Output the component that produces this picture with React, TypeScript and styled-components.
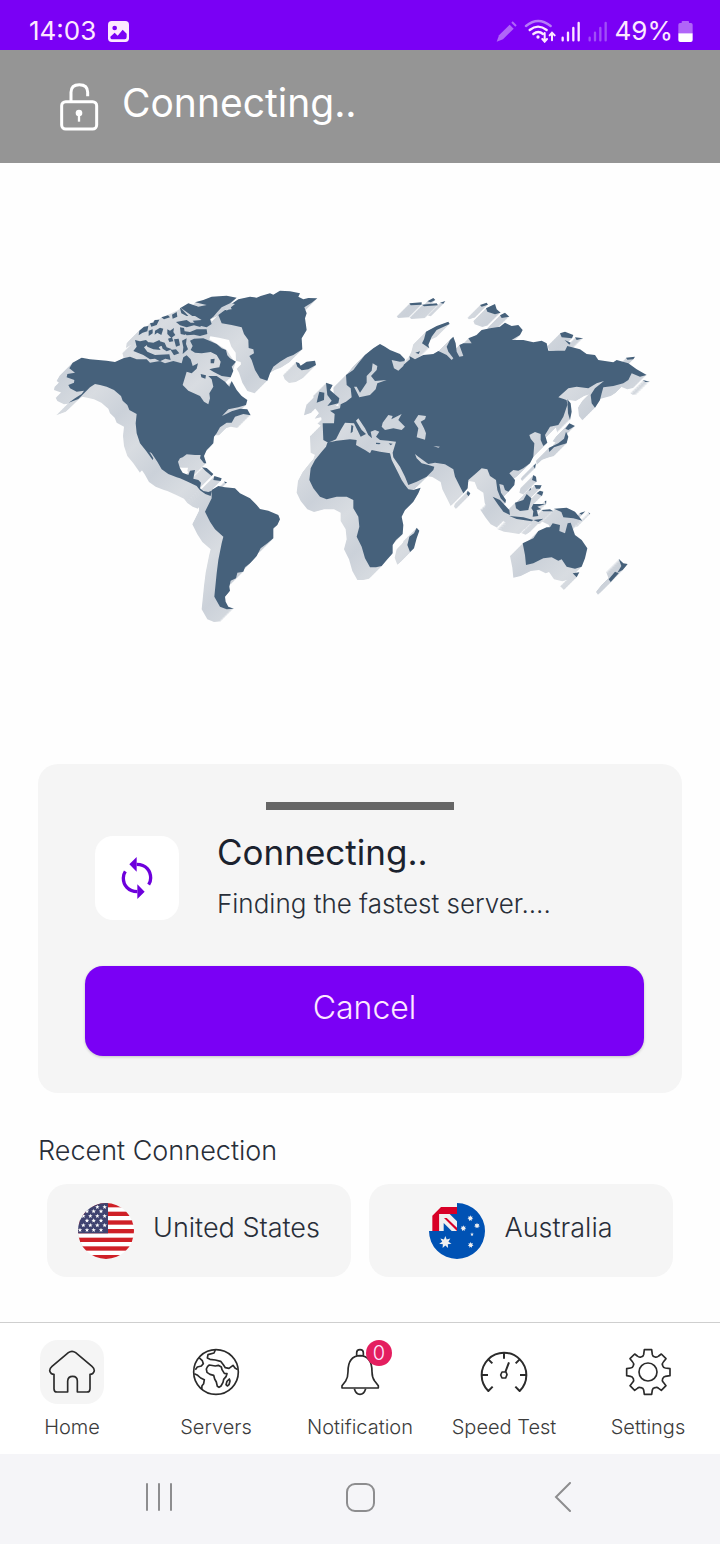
import React from 'react';
import styled, { createGlobalStyle } from 'styled-components';

const GlobalStyle = createGlobalStyle`
  * { box-sizing: border-box; }
  body { margin: 0; background: #fefefe; }
  button { border: 0; padding: 0; background: none; font: inherit; color: inherit; cursor: pointer; }
  svg { display: block; flex: none; }
`;

const purple = '#7a00f5';
const ink = '#1b222e';
const softInk = '#282e39';
const land = '#46617b';
const sea = '#cfd5dc';

const Screen = styled.div`
  display: flex;
  flex-direction: column;
  min-height: 100vh;
  font-family: Inter, 'Open Sans', sans-serif;
  font-weight: 300;
  color: ${softInk};
`;

const StatusBar = styled.div`
  display: flex;
  flex: none;
  align-items: center;
  justify-content: space-between;
  height: 50px;
  padding: 12px 27px 0 29px;
  background: ${purple};
  color: #fde8ff;
  font-weight: 400;
  font-size: 26px;
  line-height: 36px;
`;

const StatusGroup = styled.div<{ $gap: number }>`
  display: flex;
  align-items: center;
  gap: ${p => p.$gap}px;
`;

const Header = styled.header`
  display: flex;
  flex: none;
  align-items: center;
  gap: 22px;
  height: 113px;
  padding: 0 59px;
  background: #959595;
  color: #fff;
`;

const HeaderTitle = styled.h1`
  margin: 0 0 8px;
  font-size: 39px;
  line-height: 48px;
  font-weight: 400;
`;

const MapFigure = styled.div`
  svg { width: 100%; height: auto; }
`;

const Panel = styled.section`
  margin: 0 38px;
  padding: 38px 0 37px;
  border-radius: 20px;
  background: #f5f5f5;
`;

const Handle = styled.div`
  width: 188px;
  height: 8px;
  margin: 0 auto;
  background: #666;
`;

const StatusRow = styled.div`
  display: flex;
  gap: 38px;
  margin: 26px 38px 40px 57px;
`;

const IconTile = styled.div`
  display: grid;
  place-items: center;
  width: 84px;
  height: 84px;
  border-radius: 18px;
  background: #fff;
`;

const StatusTitle = styled.h2`
  margin: -6px 0 8px;
  color: ${ink};
  font-size: 35px;
  line-height: 44px;
  font-weight: 400;
`;

const StatusText = styled.p`
  margin: 0;
  font-size: 26px;
  line-height: 44px;
`;

const Actions = styled.div`
  padding: 0 38px 0 47px;
`;

const CancelButton = styled.button`
  display: block;
  width: 100%;
  height: 90px;
  padding-bottom: 6px;
  border-radius: 18px;
  background: ${purple};
  color: #fde8ff;
  font-size: 32px;
  line-height: 40px;
  box-shadow: 0 1px 3px rgba(0, 0, 0, 0.2);
`;

const SectionTitle = styled.h2`
  margin: 38px 38px 13px;
  font-size: 27px;
  line-height: 40px;
  font-weight: 300;
`;

const Recents = styled.div`
  display: grid;
  grid-template-columns: 1fr 1fr;
  gap: 18px;
  margin: 0 47px 44px;
`;

const Recent = styled.button`
  display: flex;
  align-items: center;
  justify-content: center;
  gap: 19px;
  height: 93px;
  border-radius: 20px;
  background: #f5f5f5;
  font-size: 27px;
  line-height: 40px;
`;

const RecentName = styled.span`
  padding-bottom: 6px;
`;

const TabBar = styled.nav`
  display: grid;
  flex: none;
  grid-template-columns: repeat(5, 1fr);
  height: 132px;
  margin-top: auto;
  padding-top: 17px;
  border-top: 1px solid #cfcfcf;
  background: #fff;
`;

const Tab = styled.button`
  display: flex;
  flex-direction: column;
  align-items: center;
  gap: 9px;
  color: #3c3c3c;
  font-size: 20px;
  line-height: 28px;
  white-space: nowrap;
`;

const TabIcon = styled.span<{ $active?: boolean }>`
  position: relative;
  width: 64px;
  height: 64px;
  border-radius: 18px;
  background: ${p => (p.$active ? '#f5f5f5' : 'transparent')};
`;

const Badge = styled.span`
  position: absolute;
  top: 0;
  right: 0;
  width: 26px;
  height: 26px;
  border-radius: 50%;
  background: #e41e5f;
  color: #fde8ff;
  font-size: 20px;
  line-height: 26px;
  text-align: center;
`;

const SystemBar = styled.div`
  display: grid;
  flex: none;
  grid-template-columns: repeat(3, 1fr);
  align-items: center;
  height: 90px;
  padding: 0 58px 4px;
  background: #f5f5f8;
`;

const SystemButton = styled.button`
  display: grid;
  place-items: center;
`;

/* Coastlines are stored per chart tile; each tile has its own origin. */
const tiles = {
  A: [120, 810],
  B: [540, 1290],
  C: [870, 840],
  D: [1440, 840],
  E: [1200, 1290],
} as const;
type Run = [keyof typeof tiles, string];

const outline = (...runs: Run[]) =>
  'M' +
  runs
    .flatMap(([tile, pts]) =>
      pts.split(' ').map(p => {
        const [x, y] = p.split(',').map(Number);
        return `${x + tiles[tile][0]} ${y + tiles[tile][1]}`;
      }),
    )
    .join('L') +
  'Z';

const islands = (tile: keyof typeof tiles, list: string[]) => list.map(p => outline([tile, p])).join('');

const landPath = [
  // North and Central America
  outline(
    ['A', '88,295 98,278 125,263 150,268 200,272 225,276 250,265 270,260 290,268 320,268 330,278 360,273 375,280 400,273 425,280 430,262 440,256 452,268 458,288 474,280 470,296 455,310 440,305 428,345 445,362 480,378 492,395 505,403 510,385 508,370 520,350 515,328 505,318 530,318 555,335 568,350 575,333 590,360 605,378 622,390 618,405 595,412 565,418 546,438 575,424 600,416 622,418 632,436 610,432 585,440 575,458 560,458 540,472 530,490 522,500 520,520 500,540 492,558'],
    ['B', '74,85 79,100 72,100 60,85 62,75 45,75 20,73 8,82 0,85 -6,95 0,115 8,128 25,135 30,122 45,120 42,135 40,146 55,150 63,158 60,175 70,183 85,186 95,182 92,198 76,192 60,181 50,168 25,156 0,145 -10,142'],
    ['A', '385,612 365,598 352,575 335,550 328,545 340,565 338,570 318,542 300,520 290,490 287,460 290,432 268,420 262,405 248,392 243,378 222,360 200,350 180,345 165,342 150,352 130,372 115,387 86,398 105,385 125,372 132,362 110,365 90,355 85,345 102,338 103,330 80,322 82,312 105,308'],
  ),
  // Canadian archipelago, Greenland, Iceland
  islands('A', [
    '420,115 445,100 475,110 500,105 465,97 490,90 515,80 560,77 590,83 570,100 545,112 530,128 520,140 510,148 515,162 500,172 470,165 458,152 485,150 465,138 440,138 424,130',
    '445,120 470,108 480,125 465,132',
    '450,212 462,206 490,205 515,215 530,222 545,235 558,240 562,256 570,265 588,275 575,290 580,302 572,322 545,318 520,305 508,298 520,295 538,292 542,275 530,255 512,246 485,250 465,248 452,240 458,228',
    '285,210 300,214 318,210 328,220 312,232 322,245 345,255 388,253 392,270 376,266 360,274 345,266 330,268 310,255 280,243 290,230',
    '298,182 312,170 325,168 322,184 308,188 296,196',
    '330,160 340,158 344,150 358,149 350,165 334,170',
    '364,142 384,136 390,142 372,148',
    '396,134 410,126 412,140 398,146',
    '345,182 360,173 370,176 364,195 352,188 344,194',
    '326,182 338,178 338,190 326,198',
    '382,178 390,182 402,174 400,186 406,195 394,204 382,192',
    '408,156 440,150 452,158 470,158 484,172 462,166 440,172 420,166',
    '425,182 450,186 470,178 500,178 502,192 480,198 462,194 440,196',
    '420,172 432,174 436,195 422,192',
    '426,212 440,205 438,222 444,238 428,252 430,232',
    '318,215 340,218 358,210 368,225 356,232 362,240 340,238 322,230',
    '360,214 374,218 380,232 396,238 380,244 368,236',
    '384,206 396,202 400,214 388,216',
    '392,240 408,238 418,250 402,256',
    '402,208 416,206 420,226 408,230',
    '482,312 498,316 496,326 484,322',
    '512,268 524,266 522,280 512,280',
    '535,135 555,120 575,118 570,105 595,88 630,80 650,83 662,78 690,70 700,74 720,62 750,64 780,70 775,80 790,88 805,84 832,85 815,98 793,112 800,130 795,145 800,180 785,205 787,238 760,255 742,262 720,275 700,290 690,310 682,332 660,325 645,300 635,270 628,258 642,250 640,238 626,234 625,210 612,192 605,172 575,165 545,160',
    '767,276 777,279 782,287 800,275 825,272 828,285 805,298 785,301 772,290',
  ]),
  // Caribbean and South America
  islands('B', [
    '66,112 80,114 100,132 95,138 76,122',
    '103,138 125,145 122,153 100,150',
    '133,154 142,158 135,160',
    '95,180 115,168 135,172 165,175 180,190 210,205 230,225 240,237 265,242 295,255 300,268 292,285 280,295 280,325 262,340 242,355 230,378 210,400 195,412 190,425 172,428 168,445 152,452 148,470 150,482 135,500 137,515 145,530 162,536 140,538 120,530 103,500 107,460 110,430 115,390 125,340 130,320 105,298 90,275 75,245 85,225 95,205',
  ]),
  // Africa and Madagascar
  outline(
    ['B', '442,38 470,32 510,28 530,30 528,45 555,60'],
    ['C', '240,520 245,510 270,515 300,520 305,540 325,580 335,600'],
    ['E', '15,165 25,178 40,180 62,173 55,190 40,215 15,240 5,260 10,285 8,312 -12,330 -22,345 -22,370 -40,390 -55,408 -72,412'],
    ['B', '570,412 555,385 545,350 530,320 538,290 535,260 520,235 520,210 500,200 470,200 440,208 420,200 400,175 388,150 392,115 405,90 425,65 438,50'],
  ),
  islands('E', ['50,293 58,302 50,325 42,355 30,366 22,345 28,320 42,310']),
  // Eurasia
  outline(
    ['C', '100,480 98,430 132,430 134,402 120,392 150,385 152,373 168,365 185,352 182,325 170,315 168,285 190,270 205,250 225,225 250,205 270,192 285,200 300,210 330,222 345,238 340,255 360,238 358,228 375,238 400,225 430,222 445,213 470,225 485,240 490,235 475,215 470,200 480,180 490,170 497,190 500,215 508,230 520,228 508,195 520,190 545,190 535,175 560,165 575,150'],
    ['D', '30,145 60,140 75,128 95,138 115,135 128,150 120,165 95,180 130,180 160,187 185,182 200,190 205,212 255,212 262,198 300,208 320,222 345,225 355,240 400,247 410,240 445,250 470,268 500,285 480,290 455,280 445,300 430,310 400,318 370,322 365,340 360,360 345,383 335,370 332,345 345,325 372,303 350,310 325,325 290,320 265,325 235,352 260,360 262,375 250,410 235,435 210,440 195,465 202,488 190,498 182,480 182,462 165,456 148,465 152,476 163,490 160,530 150,550 130,565 115,572'],
    ['E', '340,120 328,130 345,150 343,165 325,185 315,180 310,165 298,162 303,188 318,210 316,220 302,205 292,180 288,150 270,138 262,118 245,115 230,128 205,150 203,175 190,190 180,170 165,140 160,118 135,103 105,98 85,102 55,80 45,72 50,85 65,100 85,105 103,110 100,120 80,140 50,155 25,165 15,140 0,110 -20,82'],
    ['C', '308,518 318,485 295,482 270,480 258,470 268,455 255,450 242,455 246,475 235,465 225,445 205,415 198,422 215,450 228,462 212,470 192,430 165,428 152,450 138,478 115,488'],
  ),
  islands('C', [
    '108,308 128,315 120,330 148,355 145,370 112,378 125,362 112,345',
    '88,335 103,338 102,360 80,368 84,350',
    '408,155 440,138 475,125 479,132 440,150 425,170 415,195 418,205 396,190 402,178',
    '358,70 395,67 395,74 362,76',
    '396,74 440,70 444,76 402,79',
    '412,64 430,54 436,60 422,67',
    '450,68 466,63 460,71',
    '258,488 272,489 268,493 258,492',
    '296,490 308,491 302,496',
    '184,435 190,438 188,455 182,460',
    '376,218 390,214 386,222',
  ]),
  islands('D', [
    '0,75 20,68 24,74 5,80',
    '18,85 45,72 50,88 62,98 45,103 22,95',
    '60,106 75,98 88,110 65,114',
    '240,160 255,155 280,165 276,175 245,172',
    '285,172 310,175 290,180',
    '254,180 272,188 268,194',
    '438,233 465,230 460,238 442,239',
    '488,300 510,305 496,306',
    '262,358 272,370 275,395 270,420 264,400',
    '268,430 285,438 265,450 256,446',
    '258,455 265,470 260,490 245,494 222,502 208,516 206,504 235,490 252,476',
  ]),
  // South-east Asia and Oceania
  islands('E', [
    '400,108 408,100 405,116',
    '400,135 408,140 410,156 396,150',
    '403,165 425,166 420,176 408,176',
    '420,182 430,185 426,198 410,190',
    '386,182 394,172 392,180',
    '203,182 211,190 206,199 200,192',
    '278,200 300,210 328,240 330,255 310,245 295,225',
    '328,258 370,262 400,270 395,274 350,267',
    '345,218 370,210 380,192 394,205 385,240 360,243 348,235',
    '394,234 400,222 436,222 412,230 424,238 410,240 415,258 398,260 400,244',
    '400,270 430,266 415,276',
    '424,240 450,238 460,244 430,244',
    '434,213 439,212 438,225',
    '462,236 500,233 525,245 547,272 520,265 490,262 484,246',
    '538,250 556,244 545,254',
    '565,246 571,252 568,253',
    '368,340 400,325 415,303 440,292 450,292 458,280 480,285 478,303 495,310 503,280 512,278 525,315 545,330 562,355 555,385 545,410 525,416 500,410 485,388 475,392 455,382 430,385 400,400 378,405 375,375',
    '518,430 538,427 530,442',
    '656,386 670,400 683,402 668,420 652,428 664,408',
    '645,425 656,430 632,456 626,448',
  ]),
].join('');

const inlandSeas = [
  islands('C', [
    '248,250 262,258 260,270 243,288 255,303 290,300 262,310 257,328 240,345 208,352 192,320 200,320 210,338 230,308 230,288 245,272',
    '278,428 295,405 308,408 304,418 335,402 325,420 345,440 335,450 310,445 285,450 275,440',
    '372,425 385,405 408,408 405,418 392,425 402,445 408,460 405,479 380,472 385,445',
    '305,240 330,245 345,243 340,258 325,272 312,265',
    '430,498 450,500 445,503',
  ]),
  islands('A', ['555,110 575,100 585,102 560,122', '420,112 428,118 460,140 445,138']),
].join('');

const shadedWaters = [
  islands('A', [
    '262,262 290,200 330,160 420,118 500,108 520,170 508,208 560,240 586,280 570,325 520,330 440,300 400,280',
    '425,345 440,300 480,312 515,325 524,350 512,372 512,402 492,398 478,380 445,365',
  ]),
  islands('C', ['130,485 150,425 205,410 262,450 320,482 312,518 245,522 192,492', '86,385 110,370 150,380 136,432 98,430']),
].join('');

const shadowSteps = Array.from({ length: 19 }, (_, i) => (19 - i) * 2);

const WorldMap = () => (
  <svg viewBox="0 489 2160 1803" role="img" aria-label="World map">
    <defs>
      <path id="land" d={landPath} />
      <linearGradient id="shade" gradientUnits="userSpaceOnUse" x1="0" y1="900" x2="70" y2="970" spreadMethod="reflect">
        <stop offset="0" stopColor="#d8dce1" />
        <stop offset="1" stopColor="#cbd1d9" />
      </linearGradient>
    </defs>
    <g fill="url(#shade)">
      {shadowSteps.map(s => (
        <use key={s} href="#land" x={-s} y={s} />
      ))}
      <path d={shadedWaters} />
    </g>
    <use href="#land" fill={land} />
    <path d={inlandSeas} fill={sea} />
  </svg>
);

const star = (cx: number, cy: number, r: number, points = 5, inner = 0.42) =>
  Array.from({ length: points * 2 }, (_, i) => {
    const a = (Math.PI * i) / points - Math.PI / 2;
    const k = i % 2 ? r * inner : r;
    return `${(cx + k * Math.cos(a)).toFixed(1)},${(cy + k * Math.sin(a)).toFixed(1)}`;
  }).join(' ');

const usStars: [number, number][] = [
  [58, 12], [80, 12],
  [27, 25], [47, 25], [69, 25],
  [37, 39], [58, 39], [80, 39], [16, 39],
  [27, 53], [47, 53], [69, 53],
  [16, 67], [37, 67], [58, 67], [80, 67],
  [6, 81], [27, 81], [47, 81], [69, 81],
];

const UsFlag = () => (
  <svg width="56" height="56" viewBox="0 0 168 168" aria-hidden="true">
    <clipPath id="usRound"><circle cx="84" cy="84" r="84" /></clipPath>
    <g clipPath="url(#usRound)">
      <rect width="168" height="168" fill="#fff" />
      {[0, 26, 52, 78, 104, 130, 156].map(y => (
        <rect key={y} y={y} width="168" height="13" fill="#cf2027" />
      ))}
      <rect width="90" height="91" fill="#3f4370" />
      {usStars.map(([x, y]) => (
        <polygon key={`${x}-${y}`} points={star(x, y, 7)} fill="#fff" />
      ))}
      <path d="M0 91q8 46 48 77H0z" fill="#000" opacity=".12" />
    </g>
  </svg>
);

const AustraliaFlag = () => (
  <svg width="56" height="56" viewBox="0 0 168 168" aria-hidden="true">
    <path d="M84 0A84 84 0 1 1 0 84H84z" fill="#0052b4" />
    <path d="M10 84V38L36 12H84V33H31V84z" fill="#d80027" />
    <path d="M31 33H84V84H31z" fill="#f0f0f0" />
    <path d="M62 33H84V55z" fill="#0052b4" />
    <path d="M44 60V84H68z" fill="#0052b4" />
    <path d="M45 45H53L84 74V84z" fill="#d80027" />
    <polygon points={star(49, 118, 19, 7, 0.5)} fill="#f0f0f0" />
    <polygon points={star(124, 46, 9, 7, 0.55)} fill="#f0f0f0" />
    <polygon points={star(144, 68, 9, 7, 0.55)} fill="#f0f0f0" />
    <polygon points={star(103, 76, 9, 7, 0.55)} fill="#f0f0f0" />
    <polygon points={star(125, 126, 9, 7, 0.55)} fill="#f0f0f0" />
    <polygon points={star(129, 94, 6)} fill="#f0f0f0" />
  </svg>
);

const LockIcon = () => (
  <svg width="41" height="50" viewBox="178 245 123 150" fill="none" stroke="#fff" aria-hidden="true">
    <rect x="186" y="304" width="105" height="82" rx="12" strokeWidth="9" />
    <path d="M214 302v-26q0-23 25-23t25 23v12" strokeWidth="9" />
    <circle cx="238" cy="338" r="10" fill="#fff" stroke="none" />
    <path d="M238 340v24" strokeWidth="7" />
  </svg>
);

const PictureIcon = () => (
  <svg width="21" height="21" viewBox="0 0 63 63" aria-hidden="true">
    <rect width="63" height="63" rx="11" fill="#fde8ff" />
    <circle cx="20" cy="21" r="7" fill={purple} />
    <path d="M7 47l13-12 9 9 15-18 12 12v10q0 7-6 7H14q-7 0-7-8z" fill={purple} />
  </svg>
);

const StatusIcons = () => (
  <svg width="114" height="24" viewBox="48 56 342 72" fill="none" stroke="#fde8ff" aria-hidden="true">
    <g fill="#b065f8" stroke="none">
      <path d="M50 124l7-19 32-32 12 12-32 32z" />
      <path d="M94 67l4-4 12 12-4 4z" />
    </g>
    <g strokeWidth="7" strokeLinecap="round">
      <path d="M138 77q36-30 74 0" stroke="#b77cf8" />
      <path d="M149 89q25-20 51 0M160 101q15-12 29 0" />
      <path d="M194 98v25M187 116l7 8 7-8M216 120V98M209 105l7-8 8 8" strokeWidth="6" />
      <path d="M248 112v8M264 97v23M280 83v37M296 68v52" />
      <path d="M329 112v8M345 97v23M361 83v37M377 68v52" stroke="#a050f6" />
    </g>
    <circle cx="174" cy="110" r="5" fill="#fde8ff" stroke="none" />
  </svg>
);

const BatteryIcon = () => (
  <svg width="15" height="21" viewBox="0 0 45 63" aria-hidden="true">
    <path d="M11 2q0-2 3-2h16q3 0 3 2v4h6q5 0 5 5v26H1V11q0-5 5-5h5z" fill="#b065f8" />
    <path d="M1 37h43v20q0 6-6 6H7q-6 0-6-6z" fill="#fff" />
  </svg>
);

const SyncIcon = () => (
  <svg width="42" height="42" viewBox="258 291 126 126" aria-hidden="true">
    <g fill="none" stroke="#6d00dc" strokeWidth="10">
      <path d="M320 313c29 0 42 20 42 41 0 8-2 14-6 20" />
      <path d="M322 395c-28 0-42-20-42-41 0-8 2-14 6-20" />
    </g>
    <path d="M320 291v44l-22-22zM322 373v44l22-22z" fill="#6d00dc" />
  </svg>
);

const tabStroke = { fill: 'none', stroke: '#2b2b2b', strokeWidth: 5, strokeLinejoin: 'round' as const };

const HomeIcon = () => (
  <svg width="64" height="64" viewBox="120 75 192 192" {...tabStroke} aria-hidden="true">
    <path d="M203 231h-32q-9 0-9-10v-43q-10 0-13-11 0-7 7-13l49-41q11-8 22 0l49 41q7 6 7 13-3 11-13 11v43q0 10-9 10h-29v-33q0-14-14-14t-15 14z" />
  </svg>
);

const GlobeIcon = () => (
  <svg width="64" height="64" viewBox="552 75 192 192" {...tabStroke} aria-hidden="true">
    <circle cx="648" cy="171" r="67" />
    <path d="M597 128l10 9 3 9-6 7-12 3-6 8M583 176l10 5 9 8 11 5-2 12-5 6-1 12" />
    <path d="M646 105l-4 9-18 5-2 10 8 4 16 2 16 4 8 10 6 9 11 2 12-9 6 8 8 5" />
    <path d="M628 150l18 3 9-2 9 5 2 8 7 11 8 1-3 9-7 8-2 9-6 11-6 4-5-3-3-13-5-9-3-11-11-3-9-6-2-10 4-8z" />
    <path d="M688 192l2 6-3 11-5 4-4-4 3-10z" />
  </svg>
);

const BellIcon = () => (
  <svg width="64" height="64" viewBox="984 75 192 192" {...tabStroke} aria-hidden="true">
    <path d="M1070 122v-9q0-9 10-9t10 9v9M1063 221q5 17 17 17t17-17" />
    <path d="M1026 219v-7l11-14q7-11 7-28 0-47 36-48 36 1 36 48 0 17 8 28l11 14v7z" />
  </svg>
);

const SpeedIcon = () => (
  <svg width="64" height="64" viewBox="216 75 192 192" {...tabStroke} strokeWidth="6" aria-hidden="true">
    <path d="M278 215l-13 13a67 67 0 1 1 94 0l-13-13" />
    <path d="M312 114v17M265 133l12 12M359 133l-12 12M246 180h18M360 180h18M316 171l11-29" />
    <path d="M306 171h12l3 8-4 10h-11l-4-9z" strokeWidth="5" />
  </svg>
);

const GearIcon = () => (
  <svg width="64" height="64" viewBox="648 75 192 192" {...tabStroke} aria-hidden="true">
    <circle cx="744" cy="171" r="27" />
    <path d="M733 104h22l2 15q1 6 8 7 6 2 11-3l8-6 14 14-8 10q-5 5-2 11 2 6 8 7l14 2v21l-14 2q-6 1-8 7-3 6 2 11l8 10-14 14-8-6q-5-5-11-2-7 1-8 7l-2 13h-22l-2-13q-1-6-8-7-6-3-11 2l-8 6-14-14 8-10q5-5 2-11-2-6-8-7l-12-2v-21l12-2q6-1 8-7 3-6-2-11l-8-10 14-14 8 6q5 5 11 3 7-1 8-7z" />
  </svg>
);

const systemStroke = { fill: 'none', stroke: '#8d8d8f', strokeLinecap: 'round' as const };

const tabs = [
  { label: 'Home', Icon: HomeIcon, active: true },
  { label: 'Servers', Icon: GlobeIcon },
  { label: 'Notification', Icon: BellIcon, badge: '0' },
  { label: 'Speed Test', Icon: SpeedIcon },
  { label: 'Settings', Icon: GearIcon },
];

export default function App() {
  return (
    <Screen>
      <GlobalStyle />
      <StatusBar>
        <StatusGroup $gap={12}>
          <span>14:03</span>
          <PictureIcon />
        </StatusGroup>
        <StatusGroup $gap={5}>
          <StatusIcons />
          <span>49%</span>
          <BatteryIcon />
        </StatusGroup>
      </StatusBar>
      <Header>
        <LockIcon />
        <HeaderTitle>Connecting..</HeaderTitle>
      </Header>
      <main>
        <MapFigure>
          <WorldMap />
        </MapFigure>
        <Panel>
          <Handle />
          <StatusRow>
            <IconTile>
              <SyncIcon />
            </IconTile>
            <div>
              <StatusTitle>Connecting..</StatusTitle>
              <StatusText>Finding the fastest server....</StatusText>
            </div>
          </StatusRow>
          <Actions>
            <CancelButton type="button">Cancel</CancelButton>
          </Actions>
        </Panel>
        <SectionTitle>Recent Connection</SectionTitle>
        <Recents>
          <Recent type="button">
            <UsFlag />
            <RecentName>United States</RecentName>
          </Recent>
          <Recent type="button">
            <AustraliaFlag />
            <RecentName>Australia</RecentName>
          </Recent>
        </Recents>
      </main>
      <TabBar>
        {tabs.map(({ label, Icon, active, badge }) => (
          <Tab key={label} type="button">
            <TabIcon $active={active}>
              <Icon />
              {badge && <Badge>{badge}</Badge>}
            </TabIcon>
            {label}
          </Tab>
        ))}
      </TabBar>
      <SystemBar>
        <SystemButton type="button" aria-label="Recent apps">
          <svg width="30" height="30" viewBox="0 0 30 30" {...systemStroke} strokeWidth="2">
            <path d="M3 2v26M15 2v26M27 2v26" />
          </svg>
        </SystemButton>
        <SystemButton type="button" aria-label="Home screen">
          <svg width="30" height="30" viewBox="0 0 30 30" {...systemStroke} strokeWidth="2">
            <rect x="2" y="2" width="27" height="27" rx="8" />
          </svg>
        </SystemButton>
        <SystemButton type="button" aria-label="Back">
          <svg width="30" height="30" viewBox="0 0 30 30" {...systemStroke} strokeWidth="2">
            <path d="M24 1L10 15l14 14" />
          </svg>
        </SystemButton>
      </SystemBar>
    </Screen>
  );
}
